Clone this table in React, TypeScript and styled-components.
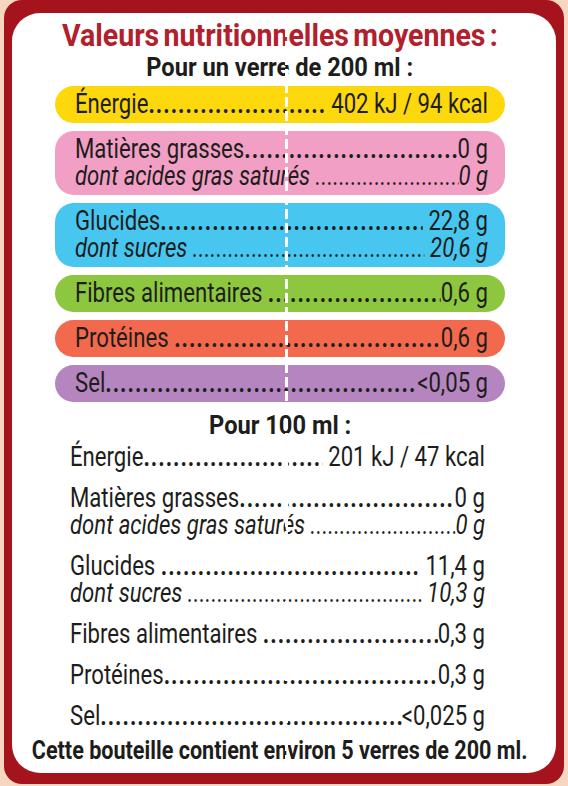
import React from "react";
import styled, { createGlobalStyle } from "styled-components";

const GlobalStyle = createGlobalStyle`
  html, body {
    margin: 0;
    padding: 0;
    background: #f8d7c2;
  }
`;

const FONT = `Roboto, "Liberation Sans", sans-serif`;
const DOTS = ".".repeat(200);
const ROW_SCALE = 0.82;
const SP = "\u00a0";

interface Line {
  label: string;
  value: string;
  sub?: boolean;
}

interface Group {
  color?: string;
  rows: Line[];
}

const perGlass: Group[] = [
  { color: "#fcd80c", rows: [{ label: "Énergie", value: SP + "402 kJ / 94 kcal" }] },
  {
    color: "#f19fc4",
    rows: [
      { label: "Matières grasses", value: "0 g" },
      { label: "dont acides gras saturés" + SP, value: "0 g", sub: true },
    ],
  },
  {
    color: "#47c6f0",
    rows: [
      { label: "Glucides", value: SP + "22,8 g" },
      { label: "dont sucres" + SP, value: SP + "20,6 g", sub: true },
    ],
  },
  { color: "#8dc63f", rows: [{ label: "Fibres alimentaires" + SP, value: "0,6 g" }] },
  { color: "#f2694d", rows: [{ label: "Protéines" + SP, value: "0,6 g" }] },
  { color: "#b585c0", rows: [{ label: "Sel", value: "<0,05 g" }] },
];

const per100: Group[] = [
  { rows: [{ label: "Énergie", value: SP + "201 kJ / 47 kcal" }] },
  {
    rows: [
      { label: "Matières grasses", value: "0 g" },
      { label: "dont acides gras saturés" + SP, value: "0 g", sub: true },
    ],
  },
  {
    rows: [
      { label: "Glucides" + SP, value: SP + "11,4 g" },
      { label: "dont sucres" + SP, value: SP + "10,3 g", sub: true },
    ],
  },
  { rows: [{ label: "Fibres alimentaires" + SP, value: "0,3 g" }] },
  { rows: [{ label: "Protéines", value: "0,3 g" }] },
  { rows: [{ label: "Sel", value: "<0,025 g" }] },
];

const Frame = styled.div`
  box-sizing: border-box;
  height: 784px;
  margin: 0 4px;
  padding: 13px 8px 11px 8px;
  background: #a5131c;
  border-radius: 18px;
`;

const Panel = styled.div`
  position: relative;
  box-sizing: border-box;
  height: 100%;
  padding: 6px 51px 0 43px;
  background: #fff;
  border-radius: 28px;
  font-family: ${FONT};
  color: #1d1d1b;

  &::after {
    content: "";
    position: absolute;
    top: 0;
    bottom: 0;
    left: 273px;
    width: 3px;
    background: repeating-linear-gradient(
      to bottom,
      #fff 0 10px,
      transparent 10px 14px
    );
  }
`;

const Centered = styled.div<{ $size: number; $line: number; $color?: string }>`
  display: flex;
  justify-content: center;
  font-size: ${({ $size }) => $size}px;
  line-height: ${({ $line }) => $line}px;
  font-weight: 700;
  color: ${({ $color }) => $color || "inherit"};
  white-space: nowrap;
`;

const Squeeze = styled.span<{ $scale: number }>`
  display: inline-block;
  transform: scaleX(${({ $scale }) => $scale});
`;

const Title = styled(Centered)`
  margin: 0;
  word-spacing: -3px;
`;

const Heading = styled(Centered)<{ $top: number }>`
  margin: ${({ $top }) => $top}px 0 6px;
`;

const Footer = styled(Centered)`
  margin: 6px -40px 0;
`;

const BarList = styled.div`
  display: flex;
  flex-direction: column;
  gap: 8px;
`;

const Bar = styled.div<{ $color: string }>`
  padding: 5px 17px 5px 20px;
  border-radius: 19px;
  background: ${({ $color }) => $color};
  overflow: hidden;
`;

const PlainList = styled.div`
  display: flex;
  flex-direction: column;
  gap: 14px;
  padding: 0 20px 0 15px;
`;

const Row = styled.div<{ $sub?: boolean }>`
  display: flex;
  width: calc(100% / ${ROW_SCALE});
  transform: scaleX(${ROW_SCALE});
  transform-origin: left center;
  font-size: 27px;
  line-height: 27px;
  font-style: ${({ $sub }) => ($sub ? "italic" : "normal")};
  white-space: nowrap;
`;

const Leader = styled.span<{ $sub?: boolean }>`
  flex: 1;
  min-width: 0;
  overflow: hidden;
  letter-spacing: ${({ $sub }) => ($sub ? "0.3px" : "1.2px")};
  font-weight: ${({ $sub }) => ($sub ? 400 : 700)};

  &::before {
    content: "${DOTS}";
  }
`;

const Lines: React.FC<{ rows: Line[] }> = ({ rows }) => (
  <div>
    {rows.map((r) => (
      <Row key={r.label} $sub={r.sub}>
        <span>{r.label}</span>
        <Leader $sub={r.sub} />
        <span>{r.value}</span>
      </Row>
    ))}
  </div>
);

const App: React.FC = () => (
  <>
    <GlobalStyle />
    <Frame>
      <Panel>
        <Title as="h1" $size={31} $line={34} $color="#b1202b">
          <Squeeze $scale={0.92}>Valeurs nutritionnelles moyennes :</Squeeze>
        </Title>
        <Heading as="h2" $size={26} $line={26} $top={1}>
          <Squeeze $scale={0.91}>Pour un verre de 200 ml :</Squeeze>
        </Heading>
        <BarList>
          {perGlass.map((g, i) => (
            <Bar key={i} $color={g.color as string}>
              <Lines rows={g.rows} />
            </Bar>
          ))}
        </BarList>
        <Heading as="h2" $size={26} $line={26} $top={10}>
          <Squeeze $scale={0.91}>Pour 100 ml :</Squeeze>
        </Heading>
        <PlainList>
          {per100.map((g, i) => (
            <Lines key={i} rows={g.rows} />
          ))}
        </PlainList>
        <Footer as="p" $size={26} $line={28}>
          <Squeeze $scale={0.83}>Cette bouteille contient environ 5 verres de 200 ml.</Squeeze>
        </Footer>
      </Panel>
    </Frame>
  </>
);

export default App;
